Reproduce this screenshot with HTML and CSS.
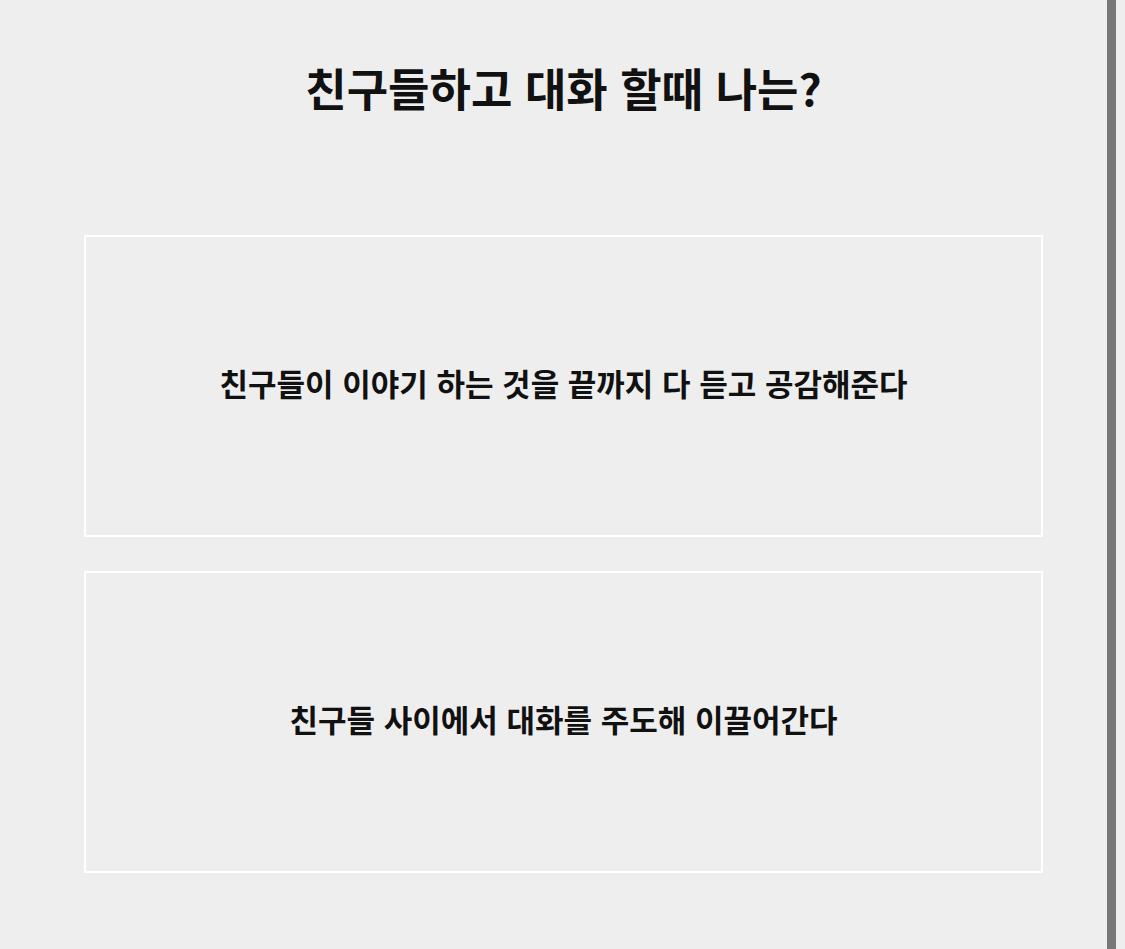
FILE: index.html
```html
<!DOCTYPE html>
<html lang="ko">
<head>
    <meta charset="UTF-8">
    <meta name="viewport" content="width=device-width, initial-scale=1.0">
    <title>친구들하고 대화 할때 나는?</title>
    <link rel="stylesheet" href="styles.css">
</head>
<body>
    <div class="question">
        <h2 class="question-title">친구들하고 대화 할때 나는?</h2>
        <div class="answers">
            <button type="button" class="answer">친구들이 이야기 하는 것을 끝까지 다 듣고 공감해준다</button>
            <button type="button" class="answer">친구들 사이에서 대화를 주도해 이끌어간다</button>
        </div>
    </div>
    <div class="side-bar"></div>
</body>
</html>
```

FILE: styles.css
```css
body {
    font-family: "Noto Sans CJK KR", "Noto Sans", sans-serif;
    background-color: #eeeeee;
    color: #111;
    margin: 0;
    padding: 0;
}
.question {
    display: flex;
    flex-direction: column;
    align-items: center;
    padding: 55px 82px 0 84px;
}
.question-title {
    font-size: 45px;
    font-weight: 700;
    margin: 0;
    line-height: 66px;
}
.answers {
    width: 100%;
    display: flex;
    flex-direction: column;
    gap: 34px;
    margin-top: 114px;
}
.answer {
    height: 302px;
    background: transparent;
    border: 2px solid #ffffff;
    font-family: inherit;
    font-size: 31px;
    font-weight: 700;
    color: #111;
    padding-bottom: 8px;
    cursor: pointer;
}
.answer:hover {
    background-color: #e6e6e6;
}
.side-bar {
    position: fixed;
    top: 0;
    right: 9px;
    width: 9px;
    height: 100%;
    background-color: #777777;
}
```
